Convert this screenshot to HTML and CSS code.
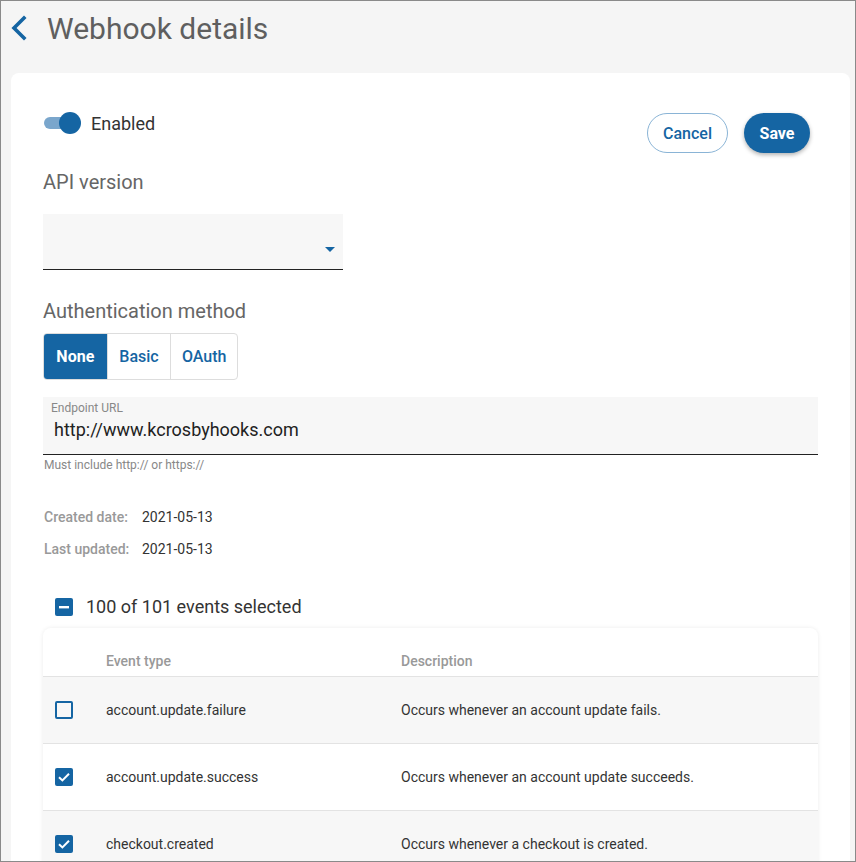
FILE: index.html
```html
<!DOCTYPE html>
<html>
<head>
<meta charset="utf-8">
<link rel="stylesheet" href="styles.css">
</head>
<body>
<div class="frame">
  <header class="page-head">
    <svg class="back" width="20" height="28" viewBox="0 0 20 28"><path d="M15 4 L5 14 L15 24" fill="none" stroke="#1565a3" stroke-width="3.6" stroke-linecap="square"/></svg>
    <h1 class="title">Webhook details</h1>
  </header>
  <main class="card">
    <div class="top-row">
      <div class="left-col">
        <div class="toggle-row">
          <span class="toggle"><span class="track"></span><span class="knob"></span></span>
          <span class="toggle-label">Enabled</span>
        </div>
        <div class="section-label api-label">API version</div>
        <div class="select"><span class="caret"></span></div>
      </div>
      <div class="actions">
        <button class="btn btn-outline">Cancel</button>
        <button class="btn btn-primary">Save</button>
      </div>
    </div>
    <div class="section-label auth-label">Authentication method</div>
    <div class="seg">
      <span class="seg-item active">None</span>
      <span class="seg-item">Basic</span>
      <span class="seg-item">OAuth</span>
    </div>
    <div class="field">
      <div class="field-label">Endpoint URL</div>
      <div class="field-value">http://www.kcrosbyhooks.com</div>
    </div>
    <div class="helper">Must include http:// or https://</div>
    <div class="meta">
      <div class="meta-row"><span class="meta-key">Created date:</span><span class="meta-val">2021-05-13</span></div>
      <div class="meta-row"><span class="meta-key">Last updated:</span><span class="meta-val">2021-05-13</span></div>
    </div>
    <div class="select-all">
      <span class="cb cb-on"><svg width="18" height="18" viewBox="0 0 18 18"><rect x="4" y="8" width="10" height="2.4" fill="#fff"/></svg></span>
      <span class="select-all-text">100 of 101 events selected</span>
    </div>
    <div class="table">
      <div class="trow thead">
        <span class="c-check"></span>
        <span class="c-type">Event type</span>
        <span class="c-desc">Description</span>
      </div>
      <div class="trow shade">
        <span class="c-check"><span class="cb cb-off"></span></span>
        <span class="c-type">account.update.failure</span>
        <span class="c-desc">Occurs whenever an account update fails.</span>
      </div>
      <div class="trow">
        <span class="c-check"><span class="cb cb-on"><svg width="18" height="18" viewBox="0 0 18 18"><path d="M4 9.2 L7.4 12.4 L14 5.8" fill="none" stroke="#fff" stroke-width="2"/></svg></span></span>
        <span class="c-type">account.update.success</span>
        <span class="c-desc">Occurs whenever an account update succeeds.</span>
      </div>
      <div class="trow shade">
        <span class="c-check"><span class="cb cb-on"><svg width="18" height="18" viewBox="0 0 18 18"><path d="M4 9.2 L7.4 12.4 L14 5.8" fill="none" stroke="#fff" stroke-width="2"/></svg></span></span>
        <span class="c-type">checkout.created</span>
        <span class="c-desc">Occurs whenever a checkout is created.</span>
      </div>
    </div>
  </main>
</div>
</body>
</html>
```

FILE: styles.css
```css
* { box-sizing: border-box; }
html, body { margin: 0; padding: 0; height: 100%; overflow: hidden; }
body {
  font-family: Roboto, "Liberation Sans", Arial, sans-serif;
  background: #f5f5f5;
  color: #333;
}
.frame {
  width: 856px;
  height: 862px;
  border: 1px solid #8a8a8a;
  background: #f5f5f5;
  padding: 0 5px 0 10px;
  overflow: hidden;
}
.page-head {
  display: flex;
  align-items: center;
  height: 72px;
  padding-bottom: 18px;
}
.back { margin-left: -2px; margin-right: 18px; }
.title {
  margin: 0;
  font-size: 30px;
  font-weight: 400;
  color: #5f5f5f;
}
.card {
  background: #fff;
  border-radius: 8px;
  padding: 40px 31px 0 32px;
  height: 900px;
  width: 839px;
}
.top-row { display: flex; justify-content: space-between; }
.left-col { display: flex; flex-direction: column; }
.toggle-row { display: flex; align-items: center; height: 22px; margin-top: -1px; }
.toggle { position: relative; width: 37px; height: 22px; display: inline-block; margin-left: 1px; }
.track { position: absolute; left: 0; top: 5px; width: 34px; height: 12px; border-radius: 6px; background: #7aa6cc; }
.knob { position: absolute; right: 0; top: 0; width: 22px; height: 22px; border-radius: 50%; background: #1565a3; }
.toggle-label { margin-left: 10px; font-size: 18px; color: #333; }
.section-label { font-size: 20px; color: #666; }
.api-label { margin-top: 36px; }
.select {
  margin-top: 20px;
  width: 300px;
  height: 56px;
  background: #f7f7f7;
  border-bottom: 1px solid #222;
  position: relative;
}
.caret {
  position: absolute;
  right: 8px;
  top: 33px;
  width: 0; height: 0;
  border-left: 5px solid transparent;
  border-right: 5px solid transparent;
  border-top: 5px solid #1565a3;
}
.actions { display: flex; gap: 16px; align-self: flex-start; margin-right: 9px; }
.btn {
  font-family: inherit;
  height: 40px;
  border-radius: 20px;
  font-size: 16px;
  padding: 0 15px;
  cursor: pointer;
}
.btn-outline { background: #fff; border: 1px solid #8ab4d6; color: #1565a3; font-weight: 500; width: 81px; }
.btn-primary { background: #1565a3; color: #fff; border: none; font-weight: 700; width: 66px; box-shadow: 0 2px 4px rgba(0,0,0,0.3); }
.auth-label { margin-top: 29px; }
.seg {
  margin-top: 10px;
  display: flex;
  width: 195px;
  border: 1px solid #ddd;
  border-radius: 4px;
  overflow: hidden;
  height: 47px;
}
.seg-item {
  display: flex;
  align-items: center;
  justify-content: center;
  font-size: 16px;
  font-weight: 500;
  color: #1565a3;
  border-left: 1px solid #ddd;
}
.seg-item:nth-child(1) { width: 63px; border-left: none; }
.seg-item:nth-child(2) { width: 64px; }
.seg-item:nth-child(3) { width: 67px; }
.seg-item.active { background: #1565a3; color: #fff; font-weight: 700; }
.field {
  margin-top: 17px;
  width: 775px;
  height: 58px;
  background: #f7f7f7;
  border-bottom: 1px solid #222;
  padding: 4px 0 0 8px;
}
.field-label { font-size: 12px; color: #888; line-height: 14px; }
.field-value { font-size: 18px; color: #222; margin-top: 3px; margin-left: 3px; line-height: 24px; }
.helper { font-size: 12px; color: #888; margin-top: 3px; margin-left: 1px; }
.meta { margin-top: 36px; display: flex; flex-direction: column; gap: 14px; }
.meta-row { display: flex; font-size: 14px; line-height: 18px; }
.meta-key { color: #999; font-weight: 500; width: 98px; margin-left: 1px; }
.meta-val { color: #333; }
.select-all { display: flex; align-items: center; margin-top: 38px; margin-left: 12px; }
.select-all-text { font-size: 18px; color: #333; margin-left: 13px; }
.cb { display: inline-block; width: 18px; height: 18px; border-radius: 2px; }
.cb svg { display: block; }
.cb-on { background: #1565a3; }
.cb-off { border: 2px solid #1565a3; }
.table {
  margin-top: 11px;
  width: 775px;
  border-radius: 8px 8px 0 0;
  box-shadow: 0 0 4px rgba(0,0,0,0.08);
  overflow: hidden;
}
.trow {
  display: flex;
  align-items: center;
  height: 67px;
  border-top: 1px solid #e3e3e3;
  font-size: 14px;
}
.trow.thead { height: 48px; border-top: none; padding-top: 17px; }
.trow.shade { background: #f7f7f7; }
.c-check { width: 63px; padding-left: 12px; display: flex; align-items: center; }
.c-type { width: 295px; color: #333; }
.c-desc { color: #333; }
.thead .c-type, .thead .c-desc { color: #999; font-weight: 500; }
```
